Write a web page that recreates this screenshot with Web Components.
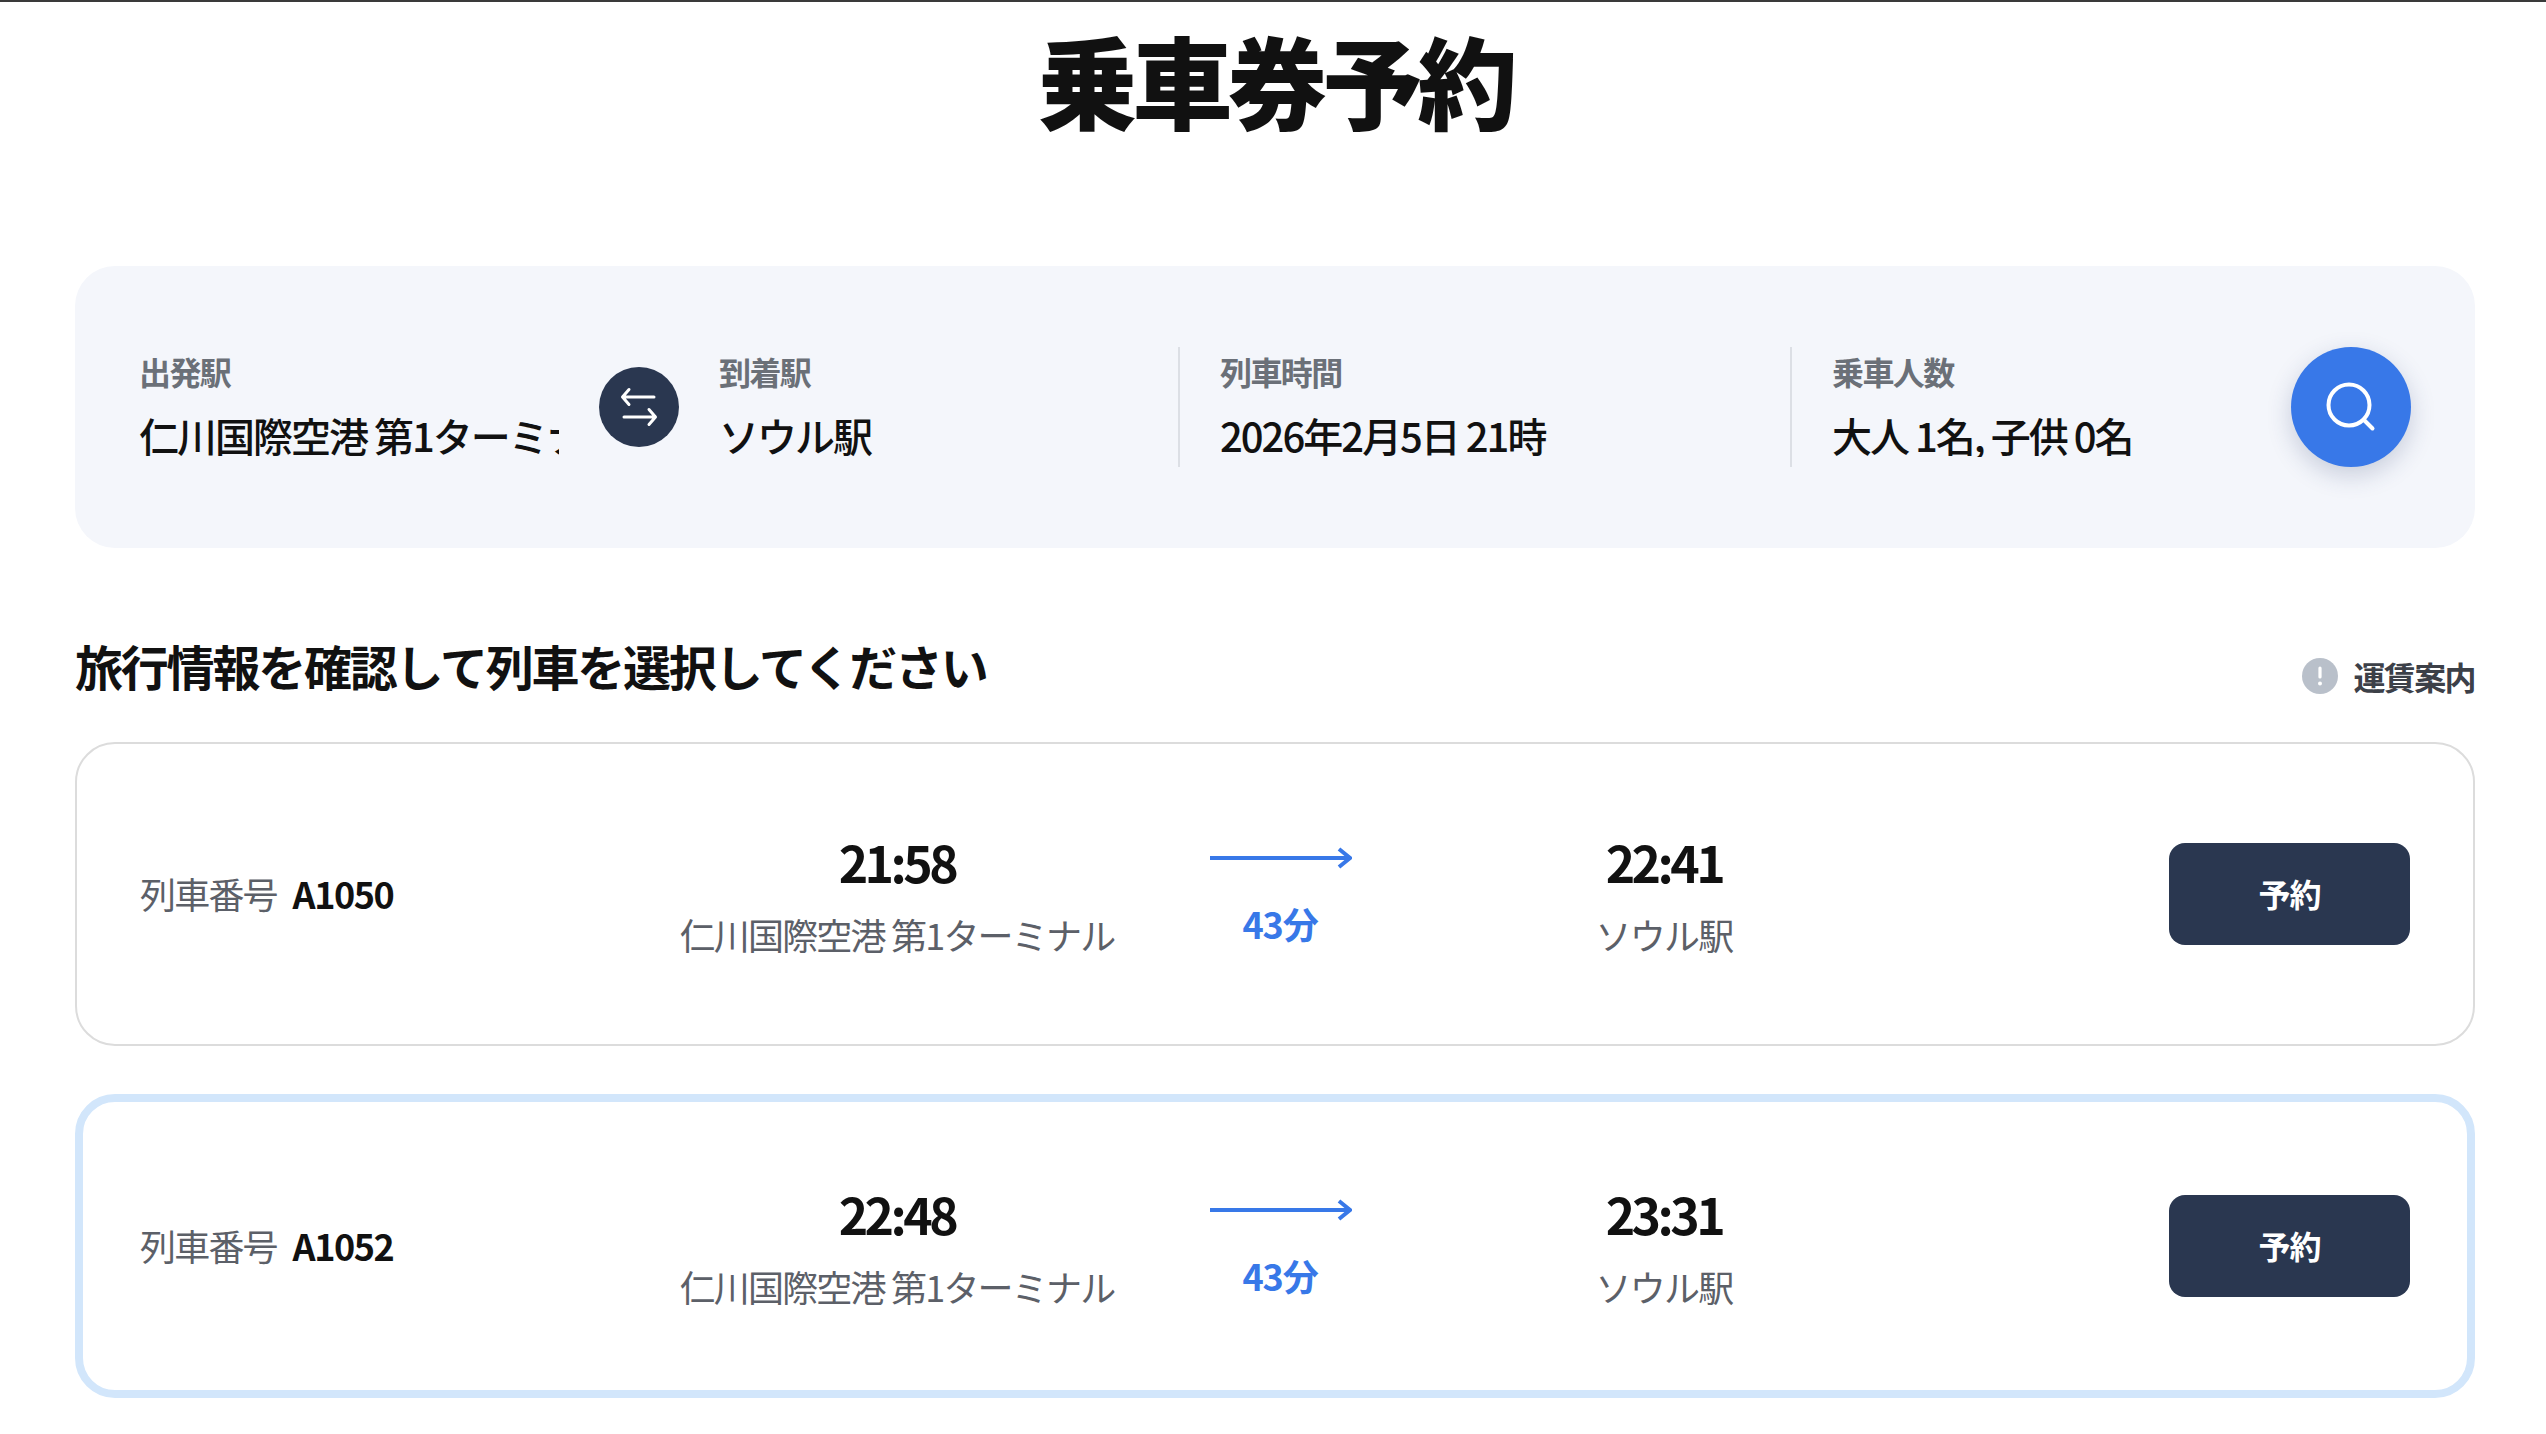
<!DOCTYPE html>
<html lang="ja">
<head>
<meta charset="UTF-8">
<title>乗車券予約</title>
<style>
  html, body { margin: 0; background: #fff; }
  body {
    border-top: 2px solid #3a3a3a;
    font-family: "Noto Sans CJK JP", "Noto Sans", sans-serif;
    color: #111;
  }
  main { display: flex; flex-direction: column; padding: 0 71px 0 75px; }
</style>
</head>
<body>
<main>
  <page-title>乗車券予約</page-title>
  <search-panel>
    <search-field style="--w:420px" label="出発駅">仁川国際空港 第1ターミナル</search-field>
    <swap-button></swap-button>
    <search-field style="--w:459px;--ml:40px" label="到着駅">ソウル駅</search-field>
    <search-field style="--w:612px" divided label="列車時間">2026年2月5日 21時</search-field>
    <search-field style="--w:460px" divided label="乗車人数">大人 1名, 子供 0名</search-field>
    <search-button></search-button>
  </search-panel>
  <section-head>旅行情報を確認して列車を選択してください</section-head>
  <train-card no="A1050" dep="21:58" arr="22:41"></train-card>
  <train-card no="A1052" dep="22:48" arr="23:31" selected></train-card>
</main>

<script>
  class PageTitle extends HTMLElement {
    constructor() {
      super();
      this.attachShadow({ mode: 'open' }).innerHTML = `
        <style>
          :host { display: block; height: 264px; text-align: center; }
          h1 { margin: 0; font-size: 100px; font-weight: 900; line-height: 154px; letter-spacing: -0.05em; color: #111; }
        </style>
        <h1><slot></slot></h1>`;
    }
  }

  class SearchPanel extends HTMLElement {
    constructor() {
      super();
      this.attachShadow({ mode: 'open' }).innerHTML = `
        <style>
          :host {
            display: flex;
            align-items: center;
            height: 282px;
            padding: 0 64px;
            background: #f4f6fb;
            border-radius: 40px;
          }
        </style>
        <slot></slot>`;
    }
  }

  class SearchField extends HTMLElement {
    constructor() {
      super();
      this.attachShadow({ mode: 'open' }).innerHTML = `
        <style>
          :host {
            display: flex;
            flex-direction: column;
            justify-content: center;
            box-sizing: border-box;
            width: var(--w);
            height: 120px;
            padding-bottom: 9px;
            margin-left: var(--ml, 0);
            flex: none;
          }
          :host([divided]) { border-left: 2px solid #dcdfe5; padding-left: 40px; }
          .label { font-size: 32px; font-weight: 700; line-height: 44px; color: #6b7078; letter-spacing: -0.05em; }
          .value {
            margin-top: 20px;
            font-size: 40px;
            font-weight: 500;
            line-height: 44px;
            letter-spacing: -0.05em;
            color: #111;
            white-space: nowrap;
            overflow: hidden;
          }
        </style>
        <div class="label"></div>
        <div class="value"><slot></slot></div>`;
      this.shadowRoot.querySelector('.label').textContent = this.getAttribute('label');
    }
  }

  class SwapButton extends HTMLElement {
    constructor() {
      super();
      this.attachShadow({ mode: 'open' }).innerHTML = `
        <style>
          :host { display: block; flex: none; width: 80px; height: 80px; margin-left: 40px; }
          svg { display: block; }
        </style>
        <svg width="80" height="80" viewBox="0 0 80 80" fill="none">
          <circle cx="40" cy="40" r="40" fill="#2a3750"/>
          <path d="M55 30H23.5M30 22.5 23.5 30l6.5 7.5M25 50h31.5M50 42.5l6.5 7.5-6.5 7.5" stroke="#fff" stroke-width="3" stroke-linecap="round" stroke-linejoin="round"/>
        </svg>`;
    }
  }

  class SearchButton extends HTMLElement {
    constructor() {
      super();
      this.attachShadow({ mode: 'open' }).innerHTML = `
        <style>
          :host {
            display: block;
            flex: none;
            width: 120px;
            height: 120px;
            margin-left: auto;
            border-radius: 50%;
            background: #3878e8;
            box-shadow: 0 8px 24px rgba(40, 60, 110, 0.22);
          }
          svg { display: block; }
        </style>
        <svg width="120" height="120" viewBox="0 0 120 120" fill="none">
          <circle cx="58" cy="58" r="20.5" stroke="#fff" stroke-width="4"/>
          <path d="M73 73l8.5 8.5" stroke="#fff" stroke-width="4" stroke-linecap="round"/>
        </svg>`;
    }
  }

  class SectionHead extends HTMLElement {
    constructor() {
      super();
      this.attachShadow({ mode: 'open' }).innerHTML = `
        <style>
          :host { display: flex; justify-content: space-between; height: 194px; box-sizing: border-box; padding-top: 85px; }
          h2 { margin: 0; font-size: 48px; font-weight: 700; line-height: 64px; letter-spacing: -0.046em; color: #111; }
          .fare { display: flex; align-items: center; gap: 15px; height: 64px; margin-top: 11px; font-size: 32px; font-weight: 700; letter-spacing: -0.05em; color: #3c4048; }
          svg { display: block; }
        </style>
        <h2><slot></slot></h2>
        <div class="fare">
          <svg width="36" height="36" viewBox="0 0 36 36">
            <circle cx="18" cy="18" r="18" fill="#b9c0ca"/>
            <rect x="16.4" y="8.5" width="3.2" height="12" rx="1.6" fill="#fff"/>
            <circle cx="18" cy="25.5" r="2" fill="#fff"/>
          </svg>
          <span>運賃案内</span>
        </div>`;
    }
  }

  class TrainCard extends HTMLElement {
    constructor() {
      super();
      const a = (n) => this.getAttribute(n);
      this.attachShadow({ mode: 'open' }).innerHTML = `
        <style>
          :host {
            display: grid;
            grid-template-columns: 480px 554px 212px 556px 1fr;
            align-items: center;
            box-sizing: border-box;
            height: 304px;
            margin-bottom: 48px;
            padding: 0 63px;
            border: 2px solid #dcdcdc;
            border-radius: 40px;
            background: #fff;
          }
          :host([selected]) { border: 8px solid #d2e6fb; padding: 0 57px; }
          .no { padding-bottom: 3px; font-size: 36px; color: #5c6068; letter-spacing: -0.05em; }
          .no b { margin-left: 9px; font-weight: 700; color: #111; letter-spacing: -0.04em; }
          .stop { display: flex; flex-direction: column; align-items: center; padding-bottom: 3px; }
          .time { font-size: 50px; font-weight: 700; line-height: 72px; letter-spacing: -0.07em; color: #111; }
          .place { margin-top: 11px; font-size: 36px; line-height: 52px; letter-spacing: -0.05em; color: #5c6068; white-space: nowrap; }
          .route { display: flex; flex-direction: column; align-items: center; padding-top: 16px; }
          .route svg { display: block; margin-top: -8px; margin-left: 2px; }
          .dur { margin-top: 28px; font-size: 36px; font-weight: 700; line-height: 52px; letter-spacing: -0.03em; color: #3878e8; }
          button {
            justify-self: end;
            width: 241px;
            height: 102px;
            padding: 0 0 3px;
            border: 0;
            border-radius: 16px;
            background: #2a3750;
            color: #fff;
            font: 700 32px "Noto Sans CJK JP", sans-serif;
            letter-spacing: -0.03em;
          }
        </style>
        <div class="no">列車番号<b> ${a('no')}</b></div>
        <div class="stop">
          <div class="time">${a('dep')}</div>
          <div class="place">仁川国際空港 第1ターミナル</div>
        </div>
        <div class="route">
          <svg width="142" height="22" viewBox="0 0 142 22" fill="none">
            <path d="M0 11H139M129 2l11 9-11 9" stroke="#3878e8" stroke-width="4"/>
          </svg>
          <div class="dur">43分</div>
        </div>
        <div class="stop">
          <div class="time">${a('arr')}</div>
          <div class="place">ソウル駅</div>
        </div>
        <button>予約</button>`;
    }
  }

  customElements.define('page-title', PageTitle);
  customElements.define('search-panel', SearchPanel);
  customElements.define('search-field', SearchField);
  customElements.define('swap-button', SwapButton);
  customElements.define('search-button', SearchButton);
  customElements.define('section-head', SectionHead);
  customElements.define('train-card', TrainCard);
</script>
</body>
</html>
